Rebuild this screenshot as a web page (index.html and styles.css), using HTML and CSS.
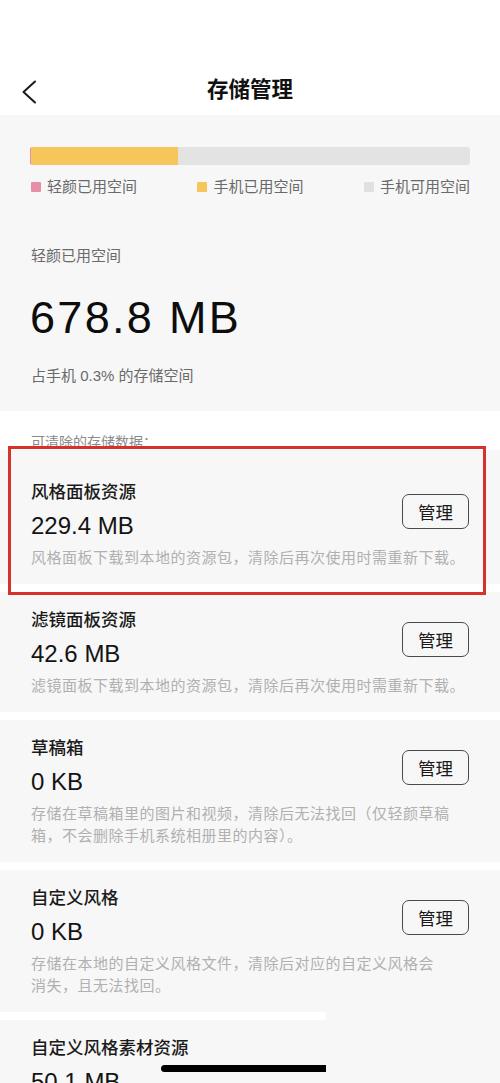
FILE: index.html
```html
<!DOCTYPE html>
<html lang="zh-CN">
<head>
<meta charset="utf-8">
<title>存储管理</title>
<link rel="stylesheet" href="styles.css">
</head>
<body>
<div class="status"></div>
<header class="nav">
  <svg class="back" width="16" height="24" viewBox="0 0 16 24"><path d="M14 1.5 L2.5 12 L14 22.5" fill="none" stroke="#1a1a1a" stroke-width="2" stroke-linecap="round" stroke-linejoin="round"/></svg>
  <h1 class="title">存储管理</h1>
</header>

<section class="summary">
  <div class="bar"><span class="seg seg-app"></span><span class="seg seg-phone" style="width:147px"></span></div>
  <div class="legend">
    <div class="legend-item"><span class="dot dot-app"></span>轻颜已用空间</div>
    <div class="legend-item"><span class="dot dot-phone"></span>手机已用空间</div>
    <div class="legend-item"><span class="dot dot-free"></span>手机可用空间</div>
  </div>
  <div class="label">轻颜已用空间</div>
  <div class="big">678.8 MB</div>
  <div class="sub">占手机 0.3% 的存储空间</div>
</section>

<div class="section-label">可清除的存储数据：</div>

<div class="cards">
  <div class="card card-marked">
    <div class="card-top">
      <div class="card-info">
        <div class="card-title">风格面板资源</div>
        <div class="card-size">229.4 MB</div>
      </div>
      <button class="btn">管理</button>
    </div>
    <p class="card-desc">风格面板下载到本地的资源包，清除后再次使用时需重新下载。</p>
    <div class="mark"></div>
  </div>

  <div class="card">
    <div class="card-top">
      <div class="card-info">
        <div class="card-title">滤镜面板资源</div>
        <div class="card-size">42.6 MB</div>
      </div>
      <button class="btn">管理</button>
    </div>
    <p class="card-desc">滤镜面板下载到本地的资源包，清除后再次使用时需重新下载。</p>
  </div>

  <div class="card">
    <div class="card-top">
      <div class="card-info">
        <div class="card-title">草稿箱</div>
        <div class="card-size">0 KB</div>
      </div>
      <button class="btn">管理</button>
    </div>
    <p class="card-desc">存储在草稿箱里的图片和视频，清除后无法找回（仅轻颜草稿<br>箱，不会删除手机系统相册里的内容）。</p>
  </div>

  <div class="card">
    <div class="card-top">
      <div class="card-info">
        <div class="card-title">自定义风格</div>
        <div class="card-size">0 KB</div>
      </div>
      <button class="btn">管理</button>
    </div>
    <p class="card-desc">存储在本地的自定义风格文件，清除后对应的自定义风格会<br>消失，且无法找回。</p>
  </div>

  <div class="card">
    <div class="card-top">
      <div class="card-info">
        <div class="card-title">自定义风格素材资源</div>
        <div class="card-size">50.1 MB</div>
      </div>
    </div>
  </div>
</div>

<div class="patch"></div>
<div class="home-indicator"></div>
</body>
</html>
```

FILE: styles.css
```css
html, body {
  margin: 0;
  padding: 0;
}
body {
  position: relative;
  width: 500px;
  background: #ffffff;
  font-family: "Liberation Sans", "Noto Sans CJK SC", sans-serif;
  color: #1a1a1a;
  overflow: hidden;
  height: 1083px;
}

.status {
  height: 60px;
}

.nav {
  height: 55px;
  display: flex;
  align-items: center;
  justify-content: center;
  position: relative;
}
.back {
  position: absolute;
  left: 21px;
  top: 20px;
}
.title {
  margin: 0;
  font-size: 21.5px;
  font-weight: 700;
  line-height: 30px;
  color: #111;
  font-family: "Noto Sans CJK SC", sans-serif;
}

.summary {
  background: #f7f7f7;
  padding: 32px 30px 24px 30px;
}
.bar {
  height: 18px;
  background: #e3e3e3;
  border-radius: 2px;
  display: flex;
  overflow: hidden;
}
.seg { display: block; height: 100%; }
.seg-app { width: 1px; background: #eb8fa8; }
.seg-phone { background: #f6c65a; }

.legend {
  margin-top: 12px;
  display: flex;
  justify-content: space-between;
  padding-left: 1px;
}
.legend-item {
  display: flex;
  align-items: center;
  font-size: 15px;
  line-height: 20px;
  color: #6a6a6a;
}
.dot {
  width: 10px;
  height: 10px;
  border-radius: 1px;
  margin-right: 6px;
}
.dot-app { background: #e88fa8; }
.dot-phone { background: #f6c65a; }
.dot-free { background: #e0e0e0; }

.label {
  margin-top: 48px;
  padding-left: 1px;
  font-size: 15px;
  line-height: 22px;
  color: #6a6a6a;
}
.big {
  margin-top: 25px;
  font-size: 45px;
  letter-spacing: 2.3px;
  line-height: 52px;
  color: #0d0d0d;
}
.sub {
  margin-top: 21px;
  padding-left: 1px;
  font-size: 15px;
  line-height: 22px;
  color: #6a6a6a;
}

.section-label {
  padding: 23px 31px 0 31px;
  font-size: 14px;
  line-height: 16px;
  color: #8a8a8a;
}

.cards {
  display: flex;
  flex-direction: column;
  gap: 8px;
}
.card {
  background: #f7f7f7;
  padding: 17px 31px 15px 31px;
  position: relative;
}
.card-marked {
  padding-top: 31px;
}
.card-top {
  display: flex;
  align-items: center;
  justify-content: space-between;
}
.card-title {
  font-size: 17.5px;
  line-height: 22px;
  font-weight: 500;
  color: #1a1a1a;
}
.card-size {
  margin-top: 8px;
  font-size: 24px;
  line-height: 30px;
  color: #141414;
}
.btn {
  width: 67px;
  height: 35px;
  border: 1px solid #4a4a4a;
  border-radius: 7px;
  background: transparent;
  font-family: "Noto Sans CJK SC", sans-serif;
  font-size: 17.5px;
  color: #1a1a1a;
  padding: 0;
  line-height: 33px;
}
.card-desc {
  margin: 6px 0 0 0;
  font-size: 15px;
  line-height: 22px;
  color: #b0b0b0;
  letter-spacing: 0.5px;
}

.mark {
  position: absolute;
  z-index: 2;
  left: 8px;
  right: 14px;
  top: -4px;
  bottom: -11px;
  border: 3px solid #d8302b;
  box-sizing: border-box;
  pointer-events: none;
}

.patch {
  position: absolute;
  z-index: 3;
  left: 326px;
  top: 1010px;
  width: 174px;
  height: 73px;
  background: #f7f7f7;
}
.home-indicator {
  position: absolute;
  z-index: 4;
  left: 161px;
  top: 1065px;
  width: 165px;
  height: 7px;
  background: #000;
  border-radius: 4px 0 0 4px;
}
```
